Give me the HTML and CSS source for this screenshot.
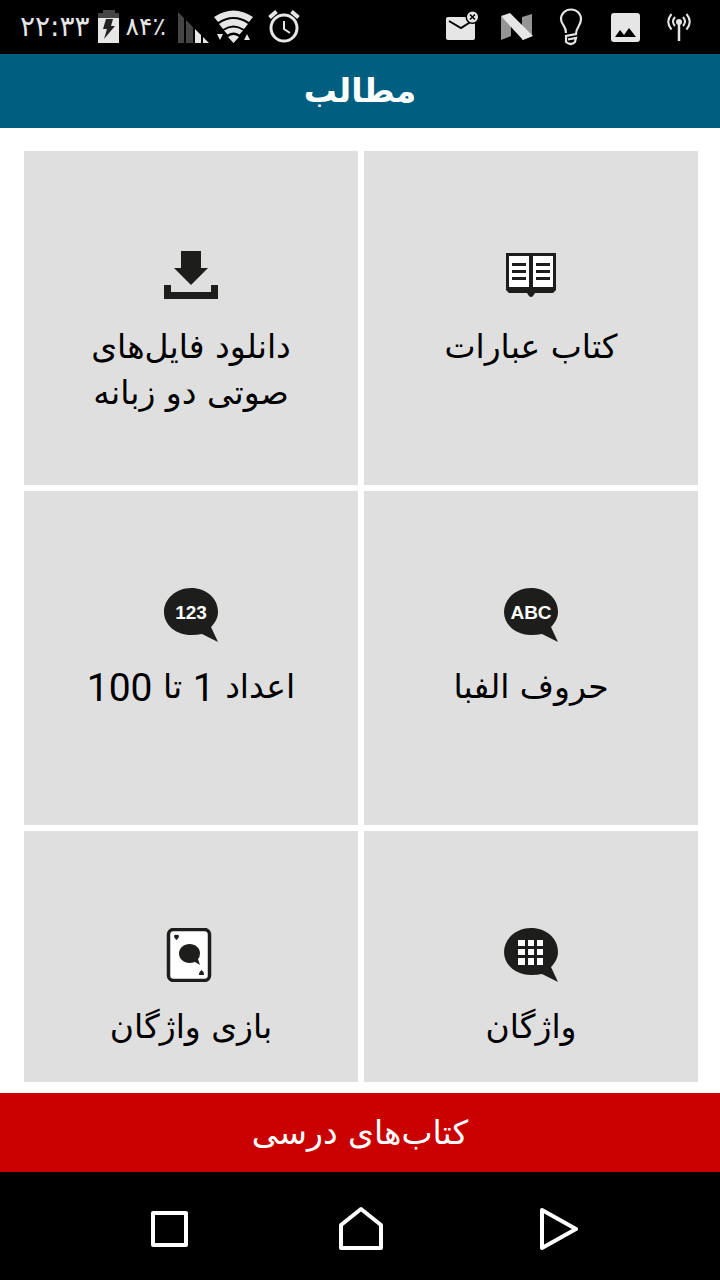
FILE: index.html
```html
<!DOCTYPE html>
<html lang="fa" dir="rtl">
<head>
    <meta charset="UTF-8">
    <meta name="viewport" content="width=device-width, initial-scale=1">
    <title>مطالب</title>
    <link rel="stylesheet" href="styles.css">
</head>
<body>
    <div class="status-bar" dir="ltr">
        <div class="status-group">
            <span class="clock">۲۲:۳۳</span>
            <svg width="22" height="34" viewBox="0 0 22 34">
                <path fill="#444" d="M5 0h12v3h4v6H0V3h5z"/>
                <path fill="#e6e6e6" d="M0 8h21v25H0z"/>
                <path fill="#222" d="M8 9h7l-2 7h4L6 29l3-10H5z"/>
            </svg>
            <span class="percent">۸۴٪</span>
            <svg width="32" height="34" viewBox="0 0 32 34">
                <path fill="#444" d="M0 2l6 6v25H0zM8 10l7 7v16H8z"/>
                <path fill="#e6e6e6" d="M17 19l6 6v8h-6zM25 27l6 6h-6z"/>
            </svg>
            <svg width="40" height="34" viewBox="0 0 40 34">
                <path fill="#e6e6e6" d="M0 7q19.500-13 39 0l-4 5q-15.500-10-31 0zM5 14q14.500-10 29 0l-4 5q-10.500-7-21 0zM10 20.500q9.500-6 19 0l-3.500 4q-6-4-12 0zM14 27q5.500-4 11 0l-5.500 6zM3 24h6l-3 6zM30 30l3-6 3 6z"/>
            </svg>
            <svg class="alarm" width="32" height="34" viewBox="0 0 32 34">
                <g fill="none" stroke="#e6e6e6">
                    <circle cx="16" cy="18" r="13" stroke-width="3"/>
                    <path stroke-width="4" d="M1.500 7.500l7-6M30.500 7.500l-7-6"/>
                    <path stroke-width="2" d="M16 11v8l6 4"/>
                </g>
            </svg>
        </div>
        <div class="notices">
            <svg width="34" height="34" viewBox="0 0 34 34">
                <rect x="0" y="7" width="29" height="23" rx="2" fill="#e6e6e6"/>
                <path fill="none" stroke="#000" stroke-width="2" d="M3 11l12 7 11-7"/>
                <circle cx="26.500" cy="7" r="7" fill="#000"/>
                <circle cx="26.500" cy="7" r="5.500" fill="#e6e6e6"/>
                <path stroke="#000" stroke-width="1.500" d="M24 4.500l5 5M29 4.500l-5 5"/>
            </svg>
            <svg width="34" height="34" viewBox="0 0 34 34">
                <path fill="#949494" d="M1 7l10-3v22L1 30zM22 7l10-3v22l-10 4z"/>
                <path fill="#e6e6e6" d="M1 6l9-3 23 23-10 4z"/>
            </svg>
            <svg width="24" height="38" viewBox="0 0 24 38">
                <g fill="none" stroke="#e6e6e6" stroke-width="2.200">
                    <path d="M7 25C7 17 2 17 2 11a10 9.500 0 0 1 20 0c0 7-5 8-5 15l-10 2v6q5 4 9 0l1-4-8 1.500"/>
                </g>
            </svg>
            <svg width="29" height="34" viewBox="0 0 29 34">
                <rect x="0" y="3" width="29" height="29" rx="3" fill="#e6e6e6"/>
                <path d="M4 27l5-7 4 5 5-7 7 9z"/>
            </svg>
            <svg width="24" height="34" viewBox="0 0 24 34">
                <circle cx="12" cy="12" r="3" fill="#e6e6e6"/>
                <g fill="none" stroke="#e6e6e6" stroke-width="2">
                    <path stroke-width="2.500" d="M12 12v19"/>
                    <path d="M8 7q-4 4.500 0 9M16 7q4 4.500 0 9M4.500 4Q-2 12 4.500 19.500M19.500 4Q26 12 19.500 19.500"/>
                </g>
            </svg>
        </div>
    </div>

    <header class="header">
        <h1>مطالب</h1>
    </header>

    <main class="topics">
        <a class="tile" href="#phrasebook">
            <svg class="icon" viewBox="0 0 54 54">
                <path fill="#1d1d1b" d="M2 5h50v37l-3 3H31l-2 3q-2 2-4 0l-2-3H5l-3-3z"/>
                <path fill="#fff" d="M5 8h20v31H5zM29 8h20v31H29z"/>
                <path fill="#1d1d1b" d="M8 15h14v3H8zM8 22h14v3H8zM8 29h14v3H8zM32 15h14v3H32zM32 22h14v3H32zM32 29h14v3H32z"/>
            </svg>
            <span>کتاب عبارات</span>
        </a>
        <a class="tile" href="#download">
            <svg class="icon" viewBox="0 0 54 54">
                <path fill="#1d1d1b" d="M17 3h20v17h7L27 37 10 20h7zM0 37h7v7h40v-7h7v14H0z"/>
            </svg>
            <span>دانلود فایل‌های صوتی دو زبانه</span>
        </a>
        <a class="tile" href="#alphabet">
            <svg class="icon" viewBox="0 0 54 54">
                <path fill="#1d1d1b" d="M27 0C42 0 54 10 54 24c0 6-3 11-7 15l7 15-16-8q-5 1-11 1C12 47 0 37 0 24S12 0 27 0z"/>
                <text class="icon-text" x="27" y="31">ABC</text>
            </svg>
            <span>حروف الفبا</span>
        </a>
        <a class="tile" href="#numbers">
            <svg class="icon" viewBox="0 0 54 54">
                <path fill="#1d1d1b" d="M27 0C42 0 54 10 54 24c0 6-3 11-7 15l7 15-16-8q-5 1-11 1C12 47 0 37 0 24S12 0 27 0z"/>
                <text class="icon-text" x="27" y="31">123</text>
            </svg>
            <span>اعداد <span class="digits">1</span> تا <span class="digits">100</span></span>
        </a>
        <a class="tile" href="#vocabulary">
            <svg class="icon" viewBox="0 0 54 54">
                <path fill="#1d1d1b" d="M27 0C42 0 54 10 54 24c0 6-3 11-7 15l7 15-16-8q-5 1-11 1C12 47 0 37 0 24S12 0 27 0z"/>
                <path fill="#fff" d="M14 12h7v6h-7zM24 12h6v6h-6zM33 12h6v6h-6zM14 21h7v6h-7zM24 21h6v6h-6zM33 21h6v6h-6zM14 30h7v7h-7zM24 30h6v7h-6zM33 30h6v7h-6z"/>
            </svg>
            <span>واژگان</span>
        </a>
        <a class="tile" href="#game">
            <svg class="icon" viewBox="0 0 54 54">
                <rect x="4.500" y="1.500" width="41" height="51" rx="5" fill="#fff" stroke="#1d1d1b" stroke-width="3.500"/>
                <path fill="#1d1d1b" d="M25.500 16c6 0 10.500 4 10.500 9q0 4-2 6l2 6-5-3q-3 1-5.500 1C20 35 15 31 15 25.500S20 16 25.500 16z"/>
                <path fill="#1d1d1b" d="M10 8q1-2 2.500-1Q14 6 15 8q0 2-2.500 4Q10 10 10 8zM35 46q0-2 2.500-4 2.500 2 2.500 4v1h-5z"/>
            </svg>
            <span>بازی واژگان</span>
        </a>
    </main>

    <a class="books" href="#books">کتاب‌های درسی</a>

    <nav class="nav-bar" dir="ltr">
        <button class="nav-button" aria-label="Recent">
            <svg width="46" height="46" viewBox="0 0 46 46"><path d="M11 7h33v32H11z"/></svg>
        </button>
        <button class="nav-button" aria-label="Home">
            <svg width="46" height="46" viewBox="0 0 46 46"><path d="M4 19L24 3l20 16v23H4z"/></svg>
        </button>
        <button class="nav-button" aria-label="Back">
            <svg width="46" height="46" viewBox="0 0 46 46"><path d="M10 4l34 19-34 19z"/></svg>
        </button>
    </nav>
</body>
</html>
```
FILE: styles.css
```css
* {
    box-sizing: border-box;
}
body {
    margin: 0;
    height: 100vh;
    display: flex;
    flex-direction: column;
    background-color: #fff;
    font-family: "DejaVu Sans", sans-serif;
    font-size: 33px;
    line-height: 46px;
    color: #000;
}
svg {
    display: block;
    flex: none;
}
.status-bar {
    display: flex;
    justify-content: space-between;
    align-items: center;
    height: 54px;
    padding: 0 14px 0 20px;
    background-color: #000;
    color: #e6e6e6;
}
.status-group {
    display: flex;
    align-items: center;
    gap: 4px;
}
.notices {
    display: grid;
    grid-template-columns: repeat(5, 54px);
    place-items: center;
}
.clock {
    margin-right: 4px;
    font-size: 28px;
}
.percent {
    margin: 0 8px 0 2px;
    font-size: 25px;
}
.alarm {
    margin-left: 10px;
}
.header {
    display: flex;
    justify-content: center;
    align-items: center;
    height: 74px;
    background-color: #005f80;
    color: #fff;
}
.header h1 {
    margin: 0;
    font-size: 33px;
}
.topics {
    flex: 1;
    min-height: 0;
    margin: 23px 22px 11px 24px;
    display: grid;
    grid-template-columns: 1fr 1fr;
    grid-auto-rows: max-content;
    gap: 6px;
    overflow-y: auto;
    scrollbar-width: none;
}
.tile {
    aspect-ratio: 1;
    display: flex;
    flex-direction: column;
    align-items: center;
    gap: 22px;
    padding: 97px 56px 0;
    background-color: #dfdfdf;
    color: #000;
    text-align: center;
    text-decoration: none;
}
.icon {
    width: 54px;
    height: 54px;
}
.icon-text {
    fill: #fff;
    font: bold 19px "Liberation Sans", sans-serif;
    text-anchor: middle;
    direction: ltr;
}
.digits {
    font-family: Roboto, sans-serif;
    font-size: 39px;
    line-height: 39px;
    vertical-align: middle;
}
.books {
    display: flex;
    justify-content: center;
    align-items: center;
    height: 79px;
    background-color: #ca0000;
    color: #fff;
    text-decoration: none;
}
.nav-bar {
    display: flex;
    justify-content: space-around;
    align-items: center;
    height: 108px;
    padding: 6px 68px 0;
    background-color: #000;
}
.nav-button {
    padding: 0;
    border: none;
    background: none;
    cursor: pointer;
}
.nav-button path {
    fill: none;
    stroke: #fff;
    stroke-width: 4;
    stroke-linejoin: round;
}
```
